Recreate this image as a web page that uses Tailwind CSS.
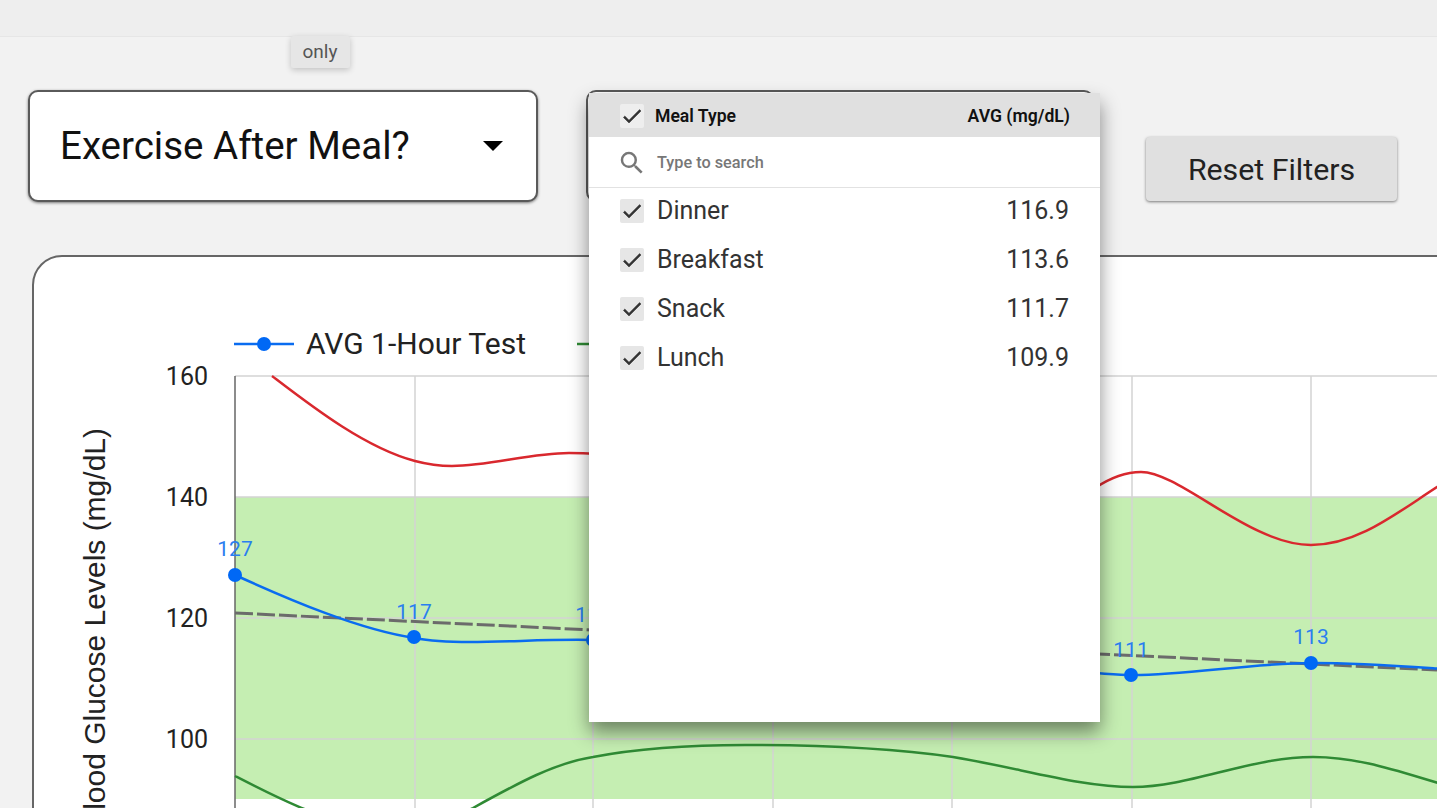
<!doctype html>
<html>
<head>
<meta charset="utf-8">
<script src="https://cdn.jsdelivr.net/npm/@tailwindcss/browser@4"></script>
</head>
<body class="overflow-hidden">
<div class="relative w-[1437px] h-[808px] overflow-hidden bg-[#f2f2f2] font-['Roboto',sans-serif]">
  <div class="h-[37px] bg-[#eeeeee] border-b border-[#e6e6e6]"></div>

  <div class="flex items-start pl-[28px] pt-[53px]">
    <div class="flex items-center justify-between w-[510px] h-[112px] pl-[31px] pr-[33px] bg-white border-2 border-[#5a5a5a] rounded-[10px] shadow-[0_1px_3px_rgba(0,0,0,0.5)]">
      <span class="text-[38.5px] leading-none text-[#111] -ml-[1px] pt-[1px]">Exercise After Meal?</span>
      <span class="w-0 h-0 border-x-[10px] border-x-transparent border-t-[10px] border-t-black"></span>
    </div>
    <div class="ml-[48px] w-[508px] h-[112px] bg-white border-2 border-[#5a5a5a] rounded-[10px]"></div>
    <button class="ml-[52px] mt-[47px] w-[251px] h-[64px] pt-[1px] bg-[#e0e0e0] rounded-[4px] text-[30.3px] text-[#222] shadow-[0_1px_3px_rgba(0,0,0,0.5)]">Reset Filters</button>
  </div>

  <div class="ml-[32px] mt-[53px] w-[1500px] h-[600px] bg-white border-2 border-[#666] rounded-[30px]">
    <svg class="block" width="1403" height="551" viewBox="34 257 1403 551" xmlns="http://www.w3.org/2000/svg">
      <rect x="235" y="497" width="1202" height="302" fill="#c5eeb2"/>
      <g stroke="#d4d4d4" stroke-width="1.5" fill="none">
        <path d="M235 376H1437M235 497H1437M235 618H1437M235 739H1437"/>
        <path d="M415 376V808M593 376V808M773 376V808M952 376V808M1132 376V808M1311 376V808"/>
      </g>
      <path d="M235 376V808" stroke="#666" stroke-width="1.5" fill="none"/>

      <path d="M272 376C310 405 365 448 415 461C430 465 440 466 452 466C490 466 530 453 569 453C577 453 585 453 593 454M1095 488C1110 478 1125 472 1141 472C1180 472 1250 545 1311 545C1360 545 1400 510 1445 482" stroke="#d9282e" stroke-width="2.5" fill="none"/>
      <path d="M235 776C270 794 320 820 360 825C400 828 440 825 473 808C520 782 555 763 593 757C640 748 700 745 745 745C810 745 890 748 953 757C1020 768 1080 787 1133 787C1190 787 1250 757 1313 757C1360 757 1400 772 1445 785" stroke="#2f8a34" stroke-width="2.5" fill="none"/>
      <path d="M235 613L1437 670" stroke="#6b6b6b" stroke-width="3" stroke-dasharray="18 4" fill="none"/>
      <path d="M235 575C290 600 360 630 415 638C430 641 450 642 470 642C510 642 550 639 593 640M1095 673C1110 674 1120 675 1133 675C1190 675 1250 663 1313 663C1360 663 1400 666 1445 669" stroke="#0a6cf0" stroke-width="2.5" fill="none"/>
      <g fill="#0068f5">
        <circle cx="235" cy="575" r="7"/><circle cx="414" cy="637" r="7"/><circle cx="593" cy="640" r="7"/><circle cx="1131" cy="675" r="7"/><circle cx="1311" cy="663" r="7"/>
      </g>
      <g font-family="Roboto, sans-serif" font-size="21" fill="#2a7ef0" text-anchor="middle">
        <text x="235" y="556">127</text><text x="414" y="619">117</text><text x="593" y="622">116</text><text x="1131" y="657">111</text><text x="1311" y="644">113</text>
      </g>
      <g font-family="Roboto, sans-serif" font-size="25" fill="#222" text-anchor="end">
        <text x="208" y="385">160</text><text x="208" y="506">140</text><text x="208" y="627">120</text><text x="208" y="748">100</text>
      </g>
      <text transform="translate(105 428) rotate(-90)" text-anchor="end" font-family="Liberation Sans, sans-serif" font-size="30" fill="#222">Blood Glucose Levels (mg/dL)</text>

      <path d="M234 344H294" stroke="#0a6cf0" stroke-width="2.5"/>
      <circle cx="264" cy="344" r="7" fill="#0068f5"/>
      <text x="306" y="354" font-family="Roboto, sans-serif" font-size="30" fill="#222">AVG 1-Hour Test</text>
      <path d="M577 344H600" stroke="#2f8a34" stroke-width="2.5"/>
    </svg>
  </div>

  <div class="absolute left-[291px] top-[36px] w-[59px] h-[32px] pr-[1px] flex items-center justify-center bg-[#e6e6e6] rounded-[2px] text-[19px] text-[#555] shadow-[0_2px_6px_rgba(0,0,0,0.2)]">only</div>

  <div class="absolute left-[589px] top-[93px] w-[511px] h-[629px] bg-white shadow-[0_10px_18px_rgba(0,0,0,0.45)]">
    <div class="flex items-center justify-between h-[44px] pt-[2px] pl-[31px] pr-[30px] bg-[#e0e0e0] text-[17.6px] font-semibold text-[#111]">
      <div class="flex items-center gap-[11px]">
        <span class="flex items-center justify-center w-[24px] h-[24px] bg-[#eeeeee] rounded-[2px]">
          <svg width="24" height="24" viewBox="0 0 24 24" fill="#333" stroke="#333" stroke-width="0.5"><path d="M9 16.17 4.83 12l-1.42 1.41L9 19 21 7l-1.41-1.41z"/></svg>
        </span>
        <span>Meal Type</span>
      </div>
      <span>AVG (mg/dL)</span>
    </div>
    <div class="flex items-center gap-[10px] h-[51px] pt-[2px] pl-[28px] border-b border-[#e2e2e2]">
      <svg width="30" height="30" viewBox="0 0 24 24" fill="#777"><path d="M15.5 14h-.79l-.28-.27A6.47 6.47 0 0 0 16 9.5 6.5 6.5 0 1 0 9.5 16c1.61 0 3.09-.59 4.23-1.57l.27.28v.79l5 4.99L20.49 19zm-6 0C7.01 14 5 11.99 5 9.5S7.01 5 9.5 5 14 7.01 14 9.5 11.99 14 9.5 14"/></svg>
      <span class="text-[16.3px] font-medium text-[#777]">Type to search</span>
    </div>
    <div class="-mt-[2px]">
      <div class="flex items-center justify-between h-[49px] pl-[31px] pr-[31px] text-[25px] text-[#333]">
        <div class="flex items-center gap-[13px]">
          <span class="flex items-center justify-center w-[24px] h-[24px] bg-[#e6e6e6] rounded-[2px]"><svg width="24" height="24" viewBox="0 0 24 24" fill="#333" stroke="#333" stroke-width="0.5"><path d="M9 16.17 4.83 12l-1.42 1.41L9 19 21 7l-1.41-1.41z"/></svg></span>
          <span>Dinner</span>
        </div>
        <span>116.9</span>
      </div>
      <div class="flex items-center justify-between h-[49px] pl-[31px] pr-[31px] text-[25px] text-[#333]">
        <div class="flex items-center gap-[13px]">
          <span class="flex items-center justify-center w-[24px] h-[24px] bg-[#e6e6e6] rounded-[2px]"><svg width="24" height="24" viewBox="0 0 24 24" fill="#333" stroke="#333" stroke-width="0.5"><path d="M9 16.17 4.83 12l-1.42 1.41L9 19 21 7l-1.41-1.41z"/></svg></span>
          <span>Breakfast</span>
        </div>
        <span>113.6</span>
      </div>
      <div class="flex items-center justify-between h-[49px] pl-[31px] pr-[31px] text-[25px] text-[#333]">
        <div class="flex items-center gap-[13px]">
          <span class="flex items-center justify-center w-[24px] h-[24px] bg-[#e6e6e6] rounded-[2px]"><svg width="24" height="24" viewBox="0 0 24 24" fill="#333" stroke="#333" stroke-width="0.5"><path d="M9 16.17 4.83 12l-1.42 1.41L9 19 21 7l-1.41-1.41z"/></svg></span>
          <span>Snack</span>
        </div>
        <span>111.7</span>
      </div>
      <div class="flex items-center justify-between h-[49px] pl-[31px] pr-[31px] text-[25px] text-[#333]">
        <div class="flex items-center gap-[13px]">
          <span class="flex items-center justify-center w-[24px] h-[24px] bg-[#e6e6e6] rounded-[2px]"><svg width="24" height="24" viewBox="0 0 24 24" fill="#333" stroke="#333" stroke-width="0.5"><path d="M9 16.17 4.83 12l-1.42 1.41L9 19 21 7l-1.41-1.41z"/></svg></span>
          <span>Lunch</span>
        </div>
        <span>109.9</span>
      </div>
    </div>
  </div>
</div>
</body>
</html>
